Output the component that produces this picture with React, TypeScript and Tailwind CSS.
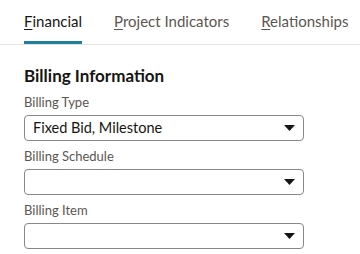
import React from "react";

const font = { fontFamily: "Lato, 'Noto Sans', sans-serif" };

function Caret() {
  return (
    <svg width="11" height="6" viewBox="0 0 11 6" className="shrink-0">
      <path d="M0 0 H11 L5.5 6 Z" fill="#161513" />
    </svg>
  );
}

function SelectBox({ label, value }: { label: string; value?: string }) {
  return (
    <div className="flex flex-col">
      <label className="text-[13px] leading-[16px] text-[#5b5652] mb-[5px]">{label}</label>
      <div className="flex items-center justify-between w-[280px] h-[26px] border border-[#8a8784] rounded-[4px] pl-[8px] pr-[8px]">
        <span className="text-[14.5px] text-[#161513]">{value}</span>
        <Caret />
      </div>
    </div>
  );
}

export default function App() {
  const tabs = [
    { first: "F", rest: "inancial", active: true },
    { first: "P", rest: "roject Indicators", active: false },
    { first: "R", rest: "elationships", active: false },
  ];

  return (
    <div className="w-[360px] h-[254px] bg-white overflow-hidden" style={font}>
      <div className="flex border-b border-[#e4e3e2] pl-[24px] gap-[32px] h-[45px]">
        {tabs.map((t) => (
          <div
            key={t.first}
            className={`flex items-center pt-[2px] border-b-[3px] ${
              t.active ? "border-[#227e9e] text-[#161513]" : "border-transparent text-[#5b5652]"
            }`}
          >
            <span className="text-[15px]">
              <span className="underline underline-offset-2">{t.first}</span>
              {t.rest}
            </span>
          </div>
        ))}
      </div>
      <div className="pl-[24px] pt-[21px]">
        <h2 className="text-[17px] font-bold text-[#161513] leading-[20px] mb-[8px]">Billing Information</h2>
        <div className="flex flex-col gap-[7px]">
          <SelectBox label="Billing Type" value="Fixed Bid, Milestone" />
          <SelectBox label="Billing Schedule" />
          <SelectBox label="Billing Item" />
        </div>
      </div>
    </div>
  );
}
